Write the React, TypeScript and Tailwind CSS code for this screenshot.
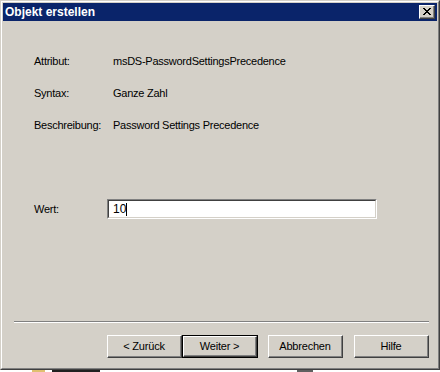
import React from "react";

const font = { fontFamily: '"Liberation Sans", Arial, sans-serif' };

function Btn({ label, def }: { label: string; def?: boolean }) {
  const inner = (
    <div className="h-full w-full border-t border-l border-t-white border-l-white border-r border-b border-r-[#404040] border-b-[#404040]">
      <div className="h-full w-full border-r border-b border-r-[#808080] border-b-[#808080] flex items-center justify-center text-[11px] leading-[13px] tracking-[-0.2px] text-black">
        {label}
      </div>
    </div>
  );
  if (def) {
    return <div className="w-[76px] h-[23px] border border-black">{inner}</div>;
  }
  return <div className="w-[75px] h-[23px]">{inner}</div>;
}

function Row({ label, value }: { label: string; value: string }) {
  return (
    <div className="flex h-[13px] items-center text-[11px] leading-[13px] tracking-[-0.25px] text-black">
      <div className="w-[79px]">{label}</div>
      <div>{value}</div>
    </div>
  );
}

export default function App() {
  return (
    <div className="w-[440px] h-[372px] bg-white overflow-hidden" style={font}>
      <div className="w-[440px] h-[370px] border-t border-l border-t-[#d4d0c8] border-l-[#d4d0c8] border-r border-b border-r-[#404040] border-b-[#404040]">
        <div className="h-full w-full border-t border-l border-t-white border-l-white border-r border-b border-r-[#808080] border-b-[#808080] bg-[#d4d0c8] p-px flex flex-col">
          {/* Title bar */}
          <div className="h-[18px] bg-[#0a246a] flex items-center justify-between pl-[2px] pr-[2px]">
            <span className="text-white font-bold text-[12px] leading-[14px]">Objekt erstellen</span>
            <div className="w-[16px] h-[14px] border-t border-l border-t-white border-l-white border-r border-b border-r-[#404040] border-b-[#404040] bg-[#d4d0c8]">
              <div className="h-full w-full border-r border-b border-r-[#808080] border-b-[#808080] flex items-center justify-center">
                <svg width="8" height="7" viewBox="0 0 8 7" shapeRendering="crispEdges">
                  <path d="M0 0h2v1h-2zM6 0h2v1h-2zM1 1h2v1h-2zM5 1h2v1h-2zM2 2h4v1h-4zM3 3h2v1h-2zM2 4h4v1h-4zM1 5h2v1h-2zM5 5h2v1h-2zM0 6h2v1h-2zM6 6h2v1h-2z" fill="#000" />
                </svg>
              </div>
            </div>
          </div>
          {/* Body */}
          <div className="flex-1 flex flex-col pt-[34px]">
            <div className="pl-[31px] flex flex-col gap-[19px]">
              <Row label="Attribut:" value="msDS-PasswordSettingsPrecedence" />
              <Row label="Syntax:" value="Ganze Zahl" />
              <Row label="Beschreibung:" value="Password Settings Precedence" />
            </div>
            <div className="mt-[67px] pl-[31px] flex items-center h-[20px] text-[11px] leading-[13px] tracking-[-0.25px] text-black">
              <div className="w-[73px]">Wert:</div>
              <div className="w-[270px] h-[20px] border-t border-l border-t-[#808080] border-l-[#808080] border-r border-b border-r-white border-b-white">
                <div className="h-full w-full border-t border-l border-t-[#404040] border-l-[#404040] border-r border-b border-r-[#d4d0c8] border-b-[#d4d0c8] bg-white flex items-center pl-[4px]">
                  <span className="text-[12px] leading-[14px] tracking-normal">10</span>
                  <span className="w-px h-[13px] bg-black"></span>
                </div>
              </div>
            </div>
            <div className="mt-[102px] ml-[11px] mr-[8px] h-[2px] border-t border-t-[#808080] border-b border-b-white"></div>
            <div className="mt-[12px] mr-[8px] flex justify-end items-center">
              <div className="flex">
                <Btn label="< Zurück" />
                <Btn label="Weiter >" def />
              </div>
              <div className="ml-[10px]">
                <Btn label="Abbrechen" />
              </div>
              <div className="ml-[11px]">
                <Btn label="Hilfe" />
              </div>
            </div>
          </div>
        </div>
      </div>
      <div className="h-[2px] flex bg-white">
        <div className="ml-[32px] w-[13px] bg-[#e0c070]"></div>
        <div className="ml-[7px] w-[48px] bg-[#202020]"></div>
        <div className="ml-[197px] w-[16px] bg-[#606060]"></div>
      </div>
    </div>
  );
}
